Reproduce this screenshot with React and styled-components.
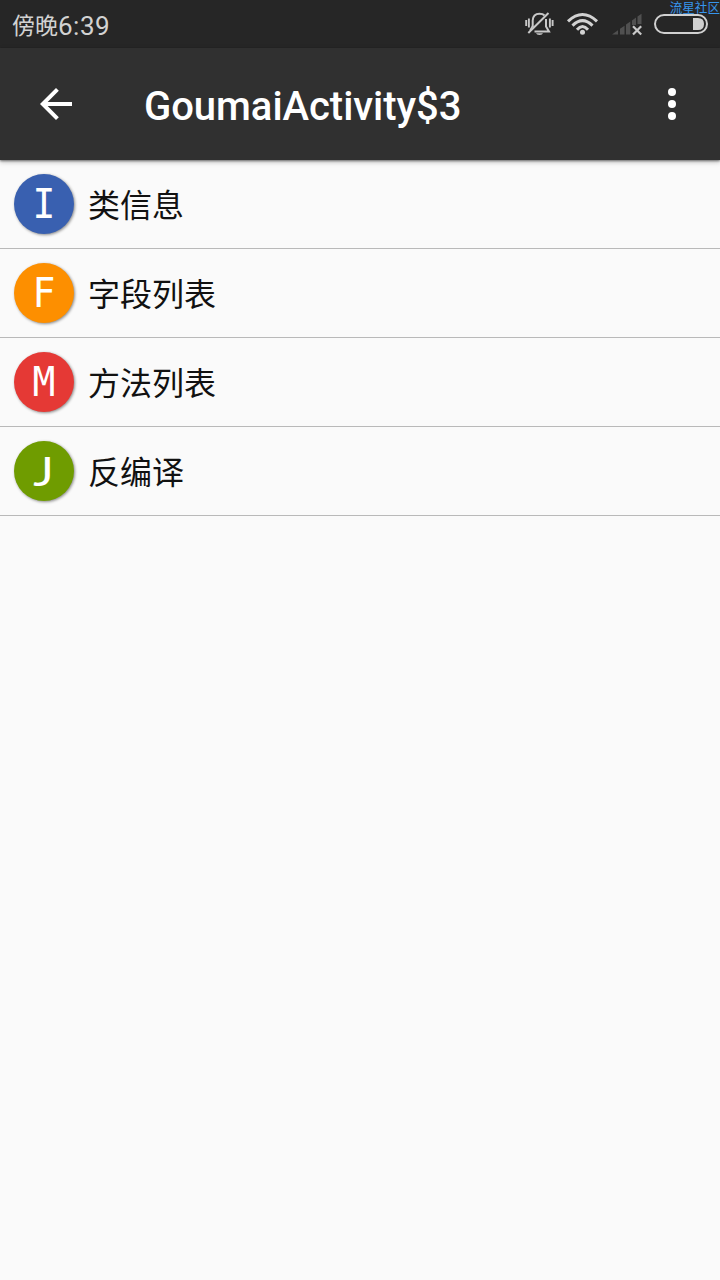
import React from "react";
import styled, { createGlobalStyle } from "styled-components";

const GlobalStyle = createGlobalStyle`
  * { box-sizing: border-box; }
  body {
    margin: 0;
    background: #fafafa;
    font-family: Roboto, "Noto Sans CJK SC", sans-serif;
  }
`;

const Screen = styled.div`
  position: relative;
  width: 720px;
  height: 1280px;
  overflow: hidden;
  background: #fafafa;
`;

const StatusBar = styled.header`
  display: flex;
  align-items: center;
  justify-content: space-between;
  height: 48px;
  padding: 0 12px;
  background: #262626;
`;

const Clock = styled.div`
  display: flex;
  align-items: center;
  height: 48px;
  color: #d2d2d2;
  font: 400 23px/46px "Noto Sans CJK SC", sans-serif;
`;

const Digits = styled.span`
  padding-top: 4px;
  letter-spacing: 0.5px;
  font: 400 26px/46px Roboto, sans-serif;
`;

const StatusIcons = styled.div`
  display: flex;
  height: 48px;
`;

const Watermark = styled.div`
  position: absolute;
  top: 0;
  right: 0;
  color: #3795ec;
  font: 400 12.6px/13px "Noto Sans CJK SC", sans-serif;
  white-space: nowrap;
`;

const Toolbar = styled.nav`
  position: relative;
  display: flex;
  align-items: center;
  height: 112px;
  padding: 0 24px 0 32px;
  background: #303030;
  box-shadow: 0 1px 2px rgba(0, 0, 0, 0.45), 0 2px 5px rgba(0, 0, 0, 0.25);
`;

const Title = styled.h1`
  flex: 1;
  margin: 0 0 0 64px;
  padding-top: 6px;
  color: #fff;
  font: 500 40px/48px Roboto, sans-serif;
  letter-spacing: -0.04px;
`;

const IconButton = styled.button`
  display: flex;
  padding: 0;
  border: 0;
  background: none;
`;

const List = styled.ul`
  margin: 0;
  padding: 0;
  list-style: none;
`;

const Row = styled.li`
  display: flex;
  align-items: center;
  gap: 14px;
  height: 89px;
  padding: 0 14px;
  border-bottom: 1px solid #b9b9b9;
`;

const Badge = styled.span`
  display: flex;
  align-items: center;
  justify-content: center;
  width: 60px;
  height: 60px;
  border-radius: 50%;
  background: ${(p) => p.$color};
  box-shadow: 1px 1px 3px rgba(0, 0, 0, 0.45);
`;

const Letter = styled.span`
  margin-right: ${(p) => p.$nudge || 0}px;
  color: #fff;
  font: 400 40px/60px ${(p) => p.$font || '"DejaVu Sans Mono"'}, monospace;
  transform: scaleX(${(p) => p.$stretch || 0.95});
`;

const Label = styled.span`
  padding-bottom: 2px;
  color: #111;
  font: 400 32px/48px "Noto Sans CJK SC", sans-serif;
`;

const entries = [
  { letter: "I", color: "#3960b0", label: "类信息" },
  { letter: "F", color: "#fd8f00", label: "字段列表" },
  { letter: "M", color: "#e53935", label: "方法列表" },
  { letter: "J", color: "#6f9c00", label: "反编译", font: "Lato", stretch: 1.22, nudge: 1 },
];

function SilentBell() {
  return (
    <svg width="40" height="48" viewBox="520 0 40 48" fill="none" stroke="#c8c8c8">
      <path d="M532.7 27V20.5Q533 13.7 539.5 13.7Q543 13.7 544.5 15.5M546 19V26.5L549 31.5H534.5" strokeWidth="2" />
      <path d="M528.3 33L548.5 13" strokeWidth="2" />
      <path d="M530 30.5L532.7 26" strokeWidth="1.6" />
      <path d="M526.2 20V26M528.9 18.5V27.5M549.9 18.5V27.5M552.6 20V26" strokeWidth="1.9" />
      <path d="M536 33.3H543Q542.5 35 539.5 35Q536.5 35 536 33.3Z" fill="#c8c8c8" stroke="none" />
    </svg>
  );
}

function Wifi() {
  return (
    <svg width="46" height="48" viewBox="560 0 46 48" fill="none" stroke="#d2d2d2" strokeWidth="3">
      <path d="M568 21.3Q582.5 7.7 597 21.3" />
      <path d="M572.5 25.6Q582.5 15.6 592.5 25.6" />
      <path d="M577 29.7Q582.5 23.5 588 29.7" />
      <circle cx="582.5" cy="32.2" r="2.5" fill="#d2d2d2" stroke="none" />
    </svg>
  );
}

function NoSignal() {
  return (
    <svg width="42" height="48" viewBox="606 0 42 48">
      <path d="M612 34.5L618 30.3V34.5ZM620 34.5V28.8L624.5 25.7V34.5ZM626 34.5V24.6L630.3 21.6V34.5ZM632 25V20.4L636 17.6V25ZM637.5 24V16.6L641.5 13.8V24Z" fill="#505050" />
      <path d="M633 26.2L641.2 34.6M641.2 26.2L633 34.6" stroke="#c8c8c8" strokeWidth="2.2" />
    </svg>
  );
}

function Battery() {
  return (
    <svg width="60" height="48" viewBox="648 0 60 48">
      <rect x="655" y="15" width="52" height="18" rx="9" fill="none" stroke="#d0d0d0" strokeWidth="2" />
      <path d="M693 18H698Q704 18 704 24Q704 30 698 30H693Z" fill="#d0d0d0" />
    </svg>
  );
}

function BackArrow() {
  return (
    <svg width="48" height="48" viewBox="0 0 24 24" fill="#fff">
      <path d="M20 11H7.83l5.59-5.59L12 4l-8 8 8 8 1.41-1.41L7.83 13H20v-2z" />
    </svg>
  );
}

function MoreDots() {
  return (
    <svg width="48" height="48" viewBox="0 0 24 24" fill="#fff">
      <circle cx="12" cy="6" r="2" />
      <circle cx="12" cy="12" r="2" />
      <circle cx="12" cy="18" r="2" />
    </svg>
  );
}

export default function App() {
  return (
    <>
      <GlobalStyle />
      <Screen>
        <StatusBar>
          <Clock>
            傍晚<Digits>6:39</Digits>
          </Clock>
          <StatusIcons>
            <SilentBell />
            <Wifi />
            <NoSignal />
            <Battery />
          </StatusIcons>
        </StatusBar>
        <Watermark>流星社区</Watermark>
        <Toolbar>
          <IconButton aria-label="Back">
            <BackArrow />
          </IconButton>
          <Title>GoumaiActivity$3</Title>
          <IconButton aria-label="More">
            <MoreDots />
          </IconButton>
        </Toolbar>
        <List>
          {entries.map((entry) => (
            <Row key={entry.letter}>
              <Badge $color={entry.color}>
                <Letter $font={entry.font} $stretch={entry.stretch} $nudge={entry.nudge}>
                  {entry.letter}
                </Letter>
              </Badge>
              <Label>{entry.label}</Label>
            </Row>
          ))}
        </List>
      </Screen>
    </>
  );
}
